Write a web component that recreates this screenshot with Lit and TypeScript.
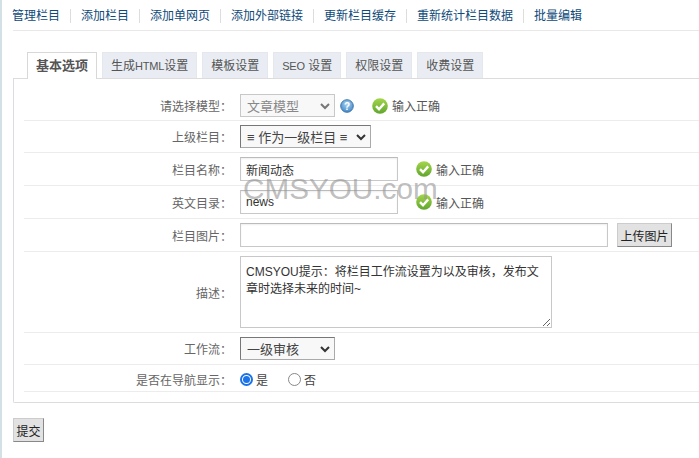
import { LitElement, html, css, svg } from "lit";
import { customElement } from "lit/decorators.js";

const check = html`<svg class="ok" viewBox="0 0 16 16" width="16" height="16">
  <defs><linearGradient id="g" x1="0" y1="0" x2="0" y2="1"><stop offset="0" stop-color="#a5d64c"/><stop offset="1" stop-color="#5fa62c"/></linearGradient></defs>
  <circle cx="8" cy="8" r="7.8" fill="url(#g)"/>
  <path d="M4 8.2 L7 11.2 L12.2 5.4" fill="none" stroke="#fff" stroke-width="2.4"/>
</svg>`;

const arrow = svg`<path d="M1 1 L5 5 L9 1" fill="none" stroke="#333" stroke-width="2"/>`;

@customElement("app-root")
export class AppRoot extends LitElement {
  static styles = css`
    :host { display: block; width: 699px; height: 458px; position: relative; overflow: hidden; background: #fff;
      font-family: "Liberation Sans", "Noto Sans CJK SC", sans-serif; font-size: 12px; color: #555; box-sizing: border-box;
      border-left: 2px solid #d3e0e6; padding-left: 11px; }
    * { box-sizing: border-box; }
    .nav { display: flex; height: 31px; align-items: center; border-bottom: 1px solid #e8e8e8; padding-top: 1px; }
    .nav a { color: #0f4a7a; line-height: 14px; padding-right: 10px; margin-right: 10px; border-right: 1px solid #ddd; }
    .nav a:first-child { margin-left: -1px; }
    .nav a:last-child { border-right: 0; }
    .tabs { display: flex; gap: 5px; margin-top: 21px; padding-left: 14px; height: 27px; position: relative; }
    .tab { height: 26px; padding: 0 8px; background: #e9edf3; border: 1px solid #e4e7ec; border-bottom: 0; font-size: 12px; line-height: 26px; color: #555; }
    .tab .lat { font-size: 11px; letter-spacing: -0.2px; }
    .tab.on { height: 27px; background: #fff; border-color: #d8d8d8; font-size: 13px; font-weight: 700; color: #555; position: relative; z-index: 1; padding: 0 8px; }
    .panel { border: 1px solid #dcdcdc; border-right: 0; margin-top: -1px; height: 325px; padding: 0 0 0 10px; border-radius: 0 0 0 2px; }
    .row { display: grid; grid-template-columns: 208px 1fr; column-gap: 8px; align-items: center; border-bottom: 1px solid #ececec; height: 32px; }
    .row.r1 { height: 42px; padding-top: 12px; }
    .row.r33 { height: 33px; }
    .row.desc { height: 81px; }
    .row.nav-show { height: 27px; padding-top: 2px; }
    .label { text-align: right; color: #666; }
    .field { display: flex; align-items: center; }
    select, input, textarea { font-family: inherit; outline: none; margin: 0; }
    .sel { appearance: none; height: 23px; background: #f8f8f8; border: 1px solid #aaa; border-top-color: #777; border-left-color: #777; font-size: 13px; display: flex; align-items: center; padding-left: 6px; color: #444; position: relative; }
    .sel svg { position: absolute; right: 4px; top: 8px; }
    .sel.model { width: 95px; color: #888; border-color: #c8c8c8; }
    .sel.model path { stroke: #777; }
    .sel.parent { width: 131px; }
    .sel.flow { width: 95px; }
    .tip { margin-left: 5px; }
    .msg { display: inline-flex; align-items: center; gap: 4px; color: #555; }
    .gap1 { margin-left: 18px; }
    .gap2 { margin-left: 18px; }
    .inp { height: 24px; width: 158px; border: 1px solid #c8c8c8; border-top-color: #bbb; box-shadow: inset 0 1px 2px #eee; padding: 0 5px; font-size: 12px; color: #333; background: #fff; }
    .inp.full { width: 368px; }
    .btn { height: 24px; background: #e2e2e2; border: 1px solid #ccc; border-right-color: #888; border-bottom-color: #888; font-family: inherit; font-size: 12px; color: #222; padding: 0; display: flex; align-items: center; justify-content: center; }
    .btn.up { width: 55px; margin-left: 9px; }
    .ta { width: 312px; height: 72px; border: 1px solid #c8c8c8; padding: 7px 5px 5px; font-size: 12px; line-height: 17px; color: #333; resize: both; }
    .radio { display: inline-flex; align-items: center; gap: 3px; color: #444; }
    .radio + .radio { margin-left: 20px; }
    .dot { width: 13px; height: 13px; border-radius: 50%; border: 1px solid #888; background: #fff; display: block; }
    .dot.on { border: 2px solid #1a73e8; position: relative; }
    .dot.on::after { content: ""; position: absolute; inset: 1px; border-radius: 50%; background: #1a73e8; }
    .submit { width: 31px; margin-top: 15px; height: 24px; }
    .wm { position: absolute; left: 241px; top: 169px; font-family: "Liberation Sans", sans-serif; font-size: 29.7px; line-height: 40px; color: rgba(150,150,150,.62); pointer-events: none; }
    .mark { position: absolute; left: -2px; top: 398px; width: 2px; height: 10px; background: #777; }
  `;

  render() {
    const nav = ["管理栏目", "添加栏目", "添加单网页", "添加外部链接", "更新栏目缓存", "重新统计栏目数据", "批量编辑"];
    const tabs = [
      html`生成<span class="lat">HTML</span>设置`,
      html`模板设置`,
      html`<span class="lat">SEO</span> 设置`,
      html`权限设置`,
      html`收费设置`,
    ];
    const chev = html`<svg width="10" height="7" viewBox="0 0 10 7">${arrow}</svg>`;
    return html`
      <div class="mark"></div>
      <div class="nav">${nav.map((n) => html`<a>${n}</a>`)}</div>
      <div class="tabs">
        <div class="tab on">基本选项</div>
        ${tabs.map((t) => html`<div class="tab">${t}</div>`)}
      </div>
      <div class="panel">
        <div class="row r1">
          <div class="label">请选择模型：</div>
          <div class="field">
            <div class="sel model">文章模型${chev}</div>
            <svg class="tip" width="14" height="14" viewBox="0 0 14 14"><defs><radialGradient id="b" cx=".5" cy=".35" r=".7"><stop offset="0" stop-color="#a9d3f2"/><stop offset="1" stop-color="#3b82c4"/></radialGradient></defs><circle cx="7" cy="7" r="6.3" fill="url(#b)" stroke="#3f78ad"/><text x="7" y="10.5" font-size="10" font-weight="700" text-anchor="middle" fill="#fff" font-family="Liberation Sans">?</text></svg>
            <span class="msg gap1">${check}<span>输入正确</span></span>
          </div>
        </div>
        <div class="row">
          <div class="label">上级栏目：</div>
          <div class="field"><div class="sel parent">≡ 作为一级栏目 ≡${chev}</div></div>
        </div>
        <div class="row r33">
          <div class="label">栏目名称：</div>
          <div class="field"><input class="inp" .value=${"新闻动态"} /><span class="msg gap2">${check}<span>输入正确</span></span></div>
        </div>
        <div class="row r33">
          <div class="label">英文目录：</div>
          <div class="field"><input class="inp" .value=${"news"} /><span class="msg gap2">${check}<span>输入正确</span></span></div>
        </div>
        <div class="row r33">
          <div class="label">栏目图片：</div>
          <div class="field"><input class="inp full" /><button class="btn up">上传图片</button></div>
        </div>
        <div class="row desc">
          <div class="label">描述：</div>
          <div class="field"><textarea class="ta" .value=${"CMSYOU提示：将栏目工作流设置为以及审核，发布文章时选择未来的时间~"}></textarea></div>
        </div>
        <div class="row">
          <div class="label">工作流：</div>
          <div class="field"><div class="sel flow">一级审核${chev}</div></div>
        </div>
        <div class="row nav-show">
          <div class="label">是否在导航显示：</div>
          <div class="field">
            <label class="radio"><span class="dot on"></span>是</label>
            <label class="radio"><span class="dot"></span>否</label>
          </div>
        </div>
      </div>
      <button class="btn submit">提交</button>
      <div class="wm">CMSYOU.com</div>
    `;
  }
}
